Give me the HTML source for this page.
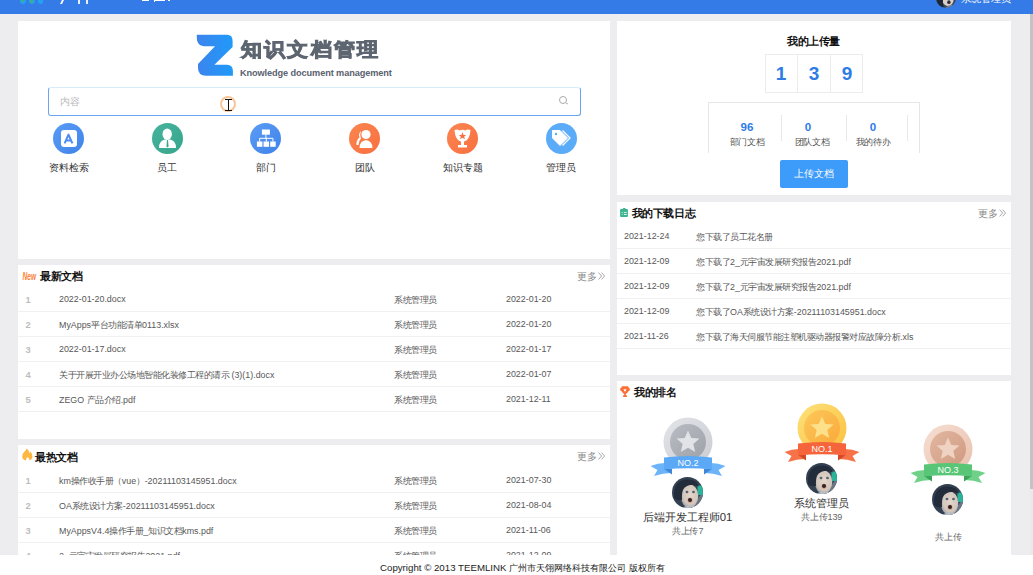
<!DOCTYPE html>
<html><head><meta charset="utf-8">
<style>
*{box-sizing:border-box;margin:0;padding:0}
html,body{width:1033px;height:575px;overflow:hidden}
body{position:relative;background:#ededf0;font-family:"Liberation Sans",sans-serif;color:#333}
.a{position:absolute;white-space:nowrap}
.card{position:absolute;background:#fff}
.hdr{position:absolute;left:0;top:0;width:1033px;height:14px;background:#357be8;overflow:hidden}
.ttl{position:absolute;font-size:10.7px;font-weight:bold;color:#111;letter-spacing:-0.4px;white-space:nowrap}
.more{position:absolute;font-size:10px;color:#888;white-space:nowrap;width:30px;height:12px}
.row{position:absolute;left:0;width:100%;height:25px;border-bottom:1px solid #f0f0f2}
.row i{font-style:normal;font-size:9px;letter-spacing:-0.5px}
.row span{position:absolute;top:7px;font-size:8.9px;color:#585858;white-space:nowrap}
.row .n{font-weight:bold;color:#bdbdbd;left:7.6px;font-size:9.4px;top:6.6px}
.lbl{position:absolute;font-size:10px;color:#333;white-space:nowrap;text-align:center;width:80px}
.ic{position:absolute;width:31px;height:31px;border-radius:50%}
</style></head><body>

<svg width="0" height="0" style="position:absolute"><defs><radialGradient id="fg" cx="0.55" cy="0.45" r="0.6"><stop offset="0" stop-color="#e3d6cc"/><stop offset="0.7" stop-color="#d2c6bd"/><stop offset="1" stop-color="#9d9ea2"/></radialGradient></defs></svg>
<!-- header -->
<div class="hdr">
  <div class="a" style="left:20px;top:-3px;width:5.8px;height:7px;border-radius:0 0 2.9px 2.9px;background:#24a0f4"></div><div class="a" style="left:21px;top:0;width:3px;height:1.6px;background:#3cae8c"></div>
  <div class="a" style="left:28.9px;top:-3px;width:5.8px;height:7px;border-radius:0 0 2.9px 2.9px;background:#24a0f4"></div><div class="a" style="left:30px;top:0;width:3px;height:2.6px;background:#3cae8c"></div>
  <div class="a" style="left:37.7px;top:-3px;width:5.6px;height:7px;border-radius:0 0 2.8px 2.8px;background:#24a0f4"></div>
  <div class="a" style="left:61.2px;top:0;width:1.6px;height:3.9px;background:#fff;transform:skewX(-25deg)"></div>
  <div class="a" style="left:78px;top:0;width:1.7px;height:3.9px;background:#e6f0ff"></div>
  <div class="a" style="left:86px;top:0;width:1.7px;height:3.9px;background:#e6f0ff"></div>
    <div class="a" style="left:142px;top:0;width:7px;height:1.1px;background:#fff"></div>
  <div class="a" style="left:154px;top:0;width:11px;height:1.2px;background:#fff"></div><div class="a" style="left:154px;top:0;width:1px;height:1.8px;background:#fff"></div><div class="a" style="left:168px;top:0;width:2px;height:1.1px;background:#fff"></div>
  <svg class="a" style="left:936px;top:-12px;filter:blur(0.3px)" width="20" height="20" viewBox="0 0 31 31">
    <defs><clipPath id="cph"><circle cx="15.5" cy="15.5" r="15.5"/></clipPath></defs>
    <g clip-path="url(#cph)">
      <rect width="31" height="31" fill="#3a4556"/>
      <ellipse cx="18.5" cy="17" rx="9" ry="11" fill="#d9d1c9"/>
      <path d="M1,24 Q0,8 8,6 Q11,12 11,18 Q10,24 12,30 Q5,30 1,24 Z" fill="#1f2734"/>
      <ellipse cx="20" cy="22" rx="2.6" ry="2.9" fill="#2a2a30"/>
      <path d="M14,31 Q22,24 31,27 L31,31 Z" fill="#7d8995"/>
      <rect x="0" y="26" width="4" height="5" fill="#2bb39a"/>
    </g>
  </svg>
  <div class="a" style="left:961px;top:-8px;font-size:10px;color:#fff">系统管理员</div>
</div>

<!-- left card 1 -->
<div class="card" style="left:18px;top:21px;width:592px;height:238px"></div>
<!-- logo -->
<svg class="a" style="left:196px;top:34px" width="38" height="43" viewBox="0 0 38 43">
  <defs><linearGradient id="zg" x1="0" y1="0" x2="1" y2="0">
    <stop offset="0" stop-color="#3d84ec"/><stop offset="1" stop-color="#1f9afa"/></linearGradient></defs>
  <path d="M0.8,0.8 L31,0.8 Q36.6,0.8 36.6,7 L36.6,13 L18.4,30.8 L31,30.8 Q36.9,31 36.9,37 L36.9,41.8 L10,41.8 Q2,41.6 2,34 L2,30 L19,12.2 L8,12.2 Q0.8,11.6 0.8,4 Z" fill="url(#zg)"/>
</svg>
<div class="a" style="left:241px;top:35.5px;font-size:21px;font-weight:bold;color:#5d6570;letter-spacing:2.2px;-webkit-text-stroke:1px #5d6570;transform:scaleY(0.9);transform-origin:0 40%">知识文档管理</div>
<div class="a" style="left:240px;top:67.5px;font-size:9.2px;font-weight:bold;color:#5b6270;letter-spacing:-0.1px">Knowledge document management</div>

<!-- search -->
<div class="a" style="left:48px;top:87px;width:533px;height:29px;border:1px solid #6aa6ee;border-top-color:#d6eefc;border-radius:3px;background:#fff"></div>
<div class="a" style="left:59.5px;top:94.5px;font-size:10px;color:#bbb">内容</div>
<div class="a" style="left:559px;top:96px;width:8px;height:8px;border:1px solid #aaa;border-radius:50%"></div>
<div class="a" style="left:566px;top:103px;width:2px;height:1px;background:#aaa;transform:rotate(45deg)"></div>
<!-- cursor -->
<div class="a" style="left:220px;top:96px;width:16px;height:16px;border:2.3px solid #f9c597;border-radius:50%"></div>
<div class="a" style="left:227.7px;top:99px;width:1.2px;height:12px;background:#111"></div>
<div class="a" style="left:225px;top:99px;width:7px;height:1.2px;background:#111"></div>
<div class="a" style="left:225px;top:109.8px;width:7px;height:1.2px;background:#111"></div>

<!-- icons -->
<div class="ic" style="left:53px;top:123px;background:linear-gradient(135deg,#5a9cf4,#3f83ea)"></div>
<div class="a" style="left:60.5px;top:129.5px;width:16.5px;height:17px;border-radius:3px;background:#fff"></div>
<svg class="a" style="left:60px;top:129px" width="17" height="18" viewBox="0 0 17 18"><path d="M4.6,14.3 L8.5,5.6 L12.4,14.3 M6.2,11.4 L10.8,11.4" stroke="#4a8cf0" stroke-width="2" fill="none" stroke-linejoin="round"/></svg>
<div class="lbl" style="left:29px;top:160.5px">资料检索</div>

<div class="ic" style="left:152px;top:123px;background:linear-gradient(135deg,#46b39c,#37a58c)"></div>
<svg class="a" style="left:152px;top:123px" width="31" height="31" viewBox="0 0 31 31">
  <ellipse cx="15.2" cy="11.3" rx="4.7" ry="5.7" fill="#fff"/>
  <path d="M7,25 Q7,17.5 13,16.5 L18,16.5 Q24,17.5 24,25 Z" fill="#fff"/>
  <path d="M15,17 L16,17 L16.6,23.5 L15.5,24.5 L14.4,23.5 Z" fill="#3aa88f"/>
</svg>
<div class="lbl" style="left:127px;top:160.5px">员工</div>

<div class="ic" style="left:250px;top:123px;background:linear-gradient(135deg,#5a9cf4,#3f83ea)"></div>
<svg class="a" style="left:250px;top:123px" width="31" height="31" viewBox="0 0 31 31">
  <rect x="11.9" y="6.5" width="8" height="5.2" fill="#fff"/>
  <path d="M15.9,11.5 V15.3 M9.65,18.6 V15.3 H22.95 V18.6 M16.3,15.3 V18.6" stroke="#fff" stroke-width="1" fill="none"/>
  <rect x="6.9" y="18.5" width="5.5" height="5.3" fill="#fff"/>
  <rect x="13.55" y="18.5" width="5.5" height="5.3" fill="#fff"/>
  <rect x="20.2" y="18.5" width="5.5" height="5.3" fill="#fff"/>
</svg>
<div class="lbl" style="left:226px;top:160.5px">部门</div>

<div class="ic" style="left:349px;top:123px;background:linear-gradient(135deg,#fb8550,#f8703f)"></div>
<svg class="a" style="left:349px;top:123px" width="31" height="31" viewBox="0 0 31 31">
  <path d="M12,8 Q9,11 10.5,14.5 Q7,17 7.5,22 L9.5,22 Q9.5,18 12,15.5 Q10.5,11.5 12,8 Z" fill="#fff"/>
  <circle cx="17" cy="11.5" r="4.6" fill="#fff"/>
  <path d="M10.5,25 Q10.5,18 17,17 Q23.5,18 23.5,25 Z" fill="#fff"/>
</svg>
<div class="lbl" style="left:325px;top:160.5px">团队</div>

<div class="ic" style="left:447px;top:123px;background:linear-gradient(135deg,#fb8550,#f8703f)"></div>
<svg class="a" style="left:447px;top:123px" width="31" height="31" viewBox="0 0 31 31">
  <path d="M7.5,7 Q11,6 12.5,7.5 Q15.5,6 18.5,7.5 Q20,6 23.5,7 L23,11 Q21.5,17.5 17,18.5 V22 H20 V24.5 H11 V22 H14 V18.5 Q9.5,17.5 8,11 Z" fill="#fff"/>
  <path d="M15.5,9.3 L16.6,11.9 L19.3,11.9 L17.2,13.6 L17.9,16.3 L15.5,14.7 L13.1,16.3 L13.8,13.6 L11.7,11.9 L14.4,11.9 Z" fill="#f8703f"/>
</svg>
<div class="lbl" style="left:423px;top:160.5px">知识专题</div>

<div class="ic" style="left:546px;top:123px;background:#5aabf8"></div>
<svg class="a" style="left:546px;top:123px" width="31" height="31" viewBox="0 0 31 31">
  <path d="M6.5,7.5 L14,7.5 L21.5,15 L14,22.5 L6.5,15 Z" fill="#fff" stroke="#fff" stroke-width="1" stroke-linejoin="round"/>
  <circle cx="10" cy="11" r="1.2" fill="#5aabf8"/>
  <path d="M16.5,7.5 L24,15 L16.5,22.5" stroke="#fff" stroke-width="1.3" fill="none"/>
</svg>
<div class="lbl" style="left:521px;top:160.5px">管理员</div>

<!-- left card 2 -->
<div class="card" style="left:18px;top:265px;width:592px;height:174px">
  <svg class="a" style="left:3.5px;top:7px" width="16" height="10" viewBox="0 0 16 10"><text x="0.5" y="8.3" font-family="Liberation Sans" font-size="10.5" font-weight="bold" font-style="italic" fill="#f98238" textLength="13.5" lengthAdjust="spacingAndGlyphs">New</text></svg>
  <div class="ttl" style="left:22px;top:5px">最新文档</div>
  <div class="more" style="left:559px;top:4.5px">更多<svg style="position:absolute;left:21px;top:2.5px" width="8" height="8" viewBox="0 0 8 8"><path d="M0.6,0.6 L3.6,4 L0.6,7.4 M3.6,0.6 L6.6,4 L3.6,7.4" stroke="#8a8a8a" stroke-width="0.75" fill="none"/></svg></div>
  <div class="row" style="top:22px"><span class="n">1</span><span style="left:41px">2022-01-20.docx</span><span style="left:376px"><i>系统管理员</i></span><span style="left:488px">2022-01-20</span></div>
  <div class="row" style="top:47px"><span class="n">2</span><span style="left:41px">MyApps<i>平台功能清单</i>0113.xlsx</span><span style="left:376px"><i>系统管理员</i></span><span style="left:488px">2022-01-20</span></div>
  <div class="row" style="top:72px"><span class="n">3</span><span style="left:41px">2022-01-17.docx</span><span style="left:376px"><i>系统管理员</i></span><span style="left:488px">2022-01-17</span></div>
  <div class="row" style="top:97px"><span class="n">4</span><span style="left:41px"><i>关于开展开业办公场地智能化装修工程的请示</i> (3)(1).docx</span><span style="left:376px"><i>系统管理员</i></span><span style="left:488px">2022-01-07</span></div>
  <div class="row" style="top:122px"><span class="n">5</span><span style="left:41px">ZEGO <i>产品介绍</i>.pdf</span><span style="left:376px"><i>系统管理员</i></span><span style="left:488px">2021-12-11</span></div>
</div>
<!-- left card 3 -->
<div class="card" style="left:18px;top:445px;width:592px;height:130px">
  <svg class="a" style="left:3.6px;top:3.2px" width="11" height="13" viewBox="0 0 11 13"><path d="M4.6,0.6 Q7.2,2.6 7.4,5.2 Q8.2,4.6 8.6,3.6 Q10.6,6 10.4,9 Q10.2,12 7.6,12.6 Q7.4,10 5.7,9 Q4,10 3.8,12.6 Q0.4,12 0.3,8.5 Q0.3,5.5 2.6,3.6 Q4.2,2.2 4.6,0.6 Z" fill="#fdb640"/></svg>
  <div class="ttl" style="left:17px;top:6px">最热文档</div>
  <div class="more" style="left:559px;top:4.5px">更多<svg style="position:absolute;left:21px;top:2.5px" width="8" height="8" viewBox="0 0 8 8"><path d="M0.6,0.6 L3.6,4 L0.6,7.4 M3.6,0.6 L6.6,4 L3.6,7.4" stroke="#8a8a8a" stroke-width="0.75" fill="none"/></svg></div>
  <div class="row" style="top:23px"><span class="n">1</span><span style="left:41px">km<i>操作收手册（</i>vue<i>）</i>-20211103145951.docx</span><span style="left:376px"><i>系统管理员</i></span><span style="left:488px">2021-07-30</span></div>
  <div class="row" style="top:48px"><span class="n">2</span><span style="left:41px">OA<i>系统设计方案</i>-20211103145951.docx</span><span style="left:376px"><i>系统管理员</i></span><span style="left:488px">2021-08-04</span></div>
  <div class="row" style="top:73px"><span class="n">3</span><span style="left:41px">MyAppsV4.4<i>操作手册</i>_<i>知识文档</i>kms.pdf</span><span style="left:376px"><i>系统管理员</i></span><span style="left:488px">2021-11-06</span></div>
  <div class="row" style="top:98px"><span class="n">4</span><span style="left:41px">2_<i>元宇宙发展研究报告</i>2021.pdf</span><span style="left:376px"><i>系统管理员</i></span><span style="left:488px">2021-12-09</span></div>
</div>
<!-- right card 1 -->
<div class="card" style="left:617px;top:21px;width:394px;height:174px">
  <div class="ttl" style="left:170px;top:14px">我的上传量</div>
  <div class="a" style="left:148px;top:33px;width:98px;height:39px;border:1px solid #ececec"></div>
  <div class="a" style="left:180px;top:33px;width:1px;height:39px;background:#ececec"></div>
  <div class="a" style="left:213px;top:33px;width:1px;height:39px;background:#ececec"></div>
  <div class="a" style="left:148px;top:42px;width:32px;text-align:center;font-size:19px;font-weight:bold;color:#2f7ce6">1</div>
  <div class="a" style="left:181px;top:42px;width:32px;text-align:center;font-size:19px;font-weight:bold;color:#2f7ce6">3</div>
  <div class="a" style="left:214px;top:42px;width:32px;text-align:center;font-size:19px;font-weight:bold;color:#2f7ce6">9</div>
  <div class="a" style="left:91px;top:81px;width:212px;height:50.5px;border:1px solid #e6e6e6;border-bottom:none"></div>
  <div class="a" style="left:164px;top:94px;width:1px;height:26px;background:#e8e8e8"></div>
  <div class="a" style="left:229px;top:94px;width:1px;height:26px;background:#e8e8e8"></div>
  <div class="a" style="left:290px;top:94px;width:1px;height:26px;background:#e8e8e8"></div>
  <div class="a" style="left:100px;top:99px;width:60px;text-align:center;font-size:11.6px;font-weight:bold;color:#2f7ce6">96</div>
  <div class="a" style="left:161px;top:99px;width:60px;text-align:center;font-size:11.6px;font-weight:bold;color:#2f7ce6">0</div>
  <div class="a" style="left:226px;top:99px;width:60px;text-align:center;font-size:11.6px;font-weight:bold;color:#2f7ce6">0</div>
  <div class="a" style="left:100px;top:114.5px;width:60px;text-align:center;font-size:9px;letter-spacing:-0.3px;color:#555">部门文档</div>
  <div class="a" style="left:165px;top:114.5px;width:60px;text-align:center;font-size:9px;letter-spacing:-0.3px;color:#555">团队文档</div>
  <div class="a" style="left:226px;top:114.5px;width:60px;text-align:center;font-size:9px;letter-spacing:-0.3px;color:#555">我的待办</div>
  <div class="a" style="left:163px;top:139px;width:68px;height:28px;border-radius:2px;background:#3d9bfa;color:#fff;font-size:9.8px;text-align:center;line-height:28px">上传文档</div>
</div>
<!-- right card 2 -->
<div class="card" style="left:617px;top:202px;width:394px;height:173px">
  <svg class="a" style="left:3px;top:6px" width="8" height="9" viewBox="0 0 8 9"><rect x="0.1" y="1" width="7.8" height="7.9" rx="0.9" fill="#3ab38f"/><rect x="2.9" y="0" width="2.6" height="1.6" rx="0.4" fill="#3ab38f"/><circle cx="2.2" cy="4.4" r="0.6" fill="#cfe9e0"/><circle cx="2.2" cy="6.5" r="0.6" fill="#cfe9e0"/><rect x="3.9" y="3.9" width="2.8" height="1" fill="#e2f3ee"/><rect x="3.9" y="6" width="2.8" height="1" fill="#e2f3ee"/></svg>
  <div class="ttl" style="left:14.5px;top:5px">我的下载日志</div>
  <div class="more" style="left:361px;top:4.5px">更多<svg style="position:absolute;left:21px;top:2.5px" width="8" height="8" viewBox="0 0 8 8"><path d="M0.6,0.6 L3.6,4 L0.6,7.4 M3.6,0.6 L6.6,4 L3.6,7.4" stroke="#8a8a8a" stroke-width="0.75" fill="none"/></svg></div>
  <div class="row" style="top:22px"><span style="left:7px">2021-12-24</span><span style="left:79px"><i>您下载了员工花名册</i></span></div>
  <div class="row" style="top:47px"><span style="left:7px">2021-12-09</span><span style="left:79px"><i>您下载了</i>2_<i>元宇宙发展研究报告</i>2021.pdf</span></div>
  <div class="row" style="top:72px"><span style="left:7px">2021-12-09</span><span style="left:79px"><i>您下载了</i>2_<i>元宇宙发展研究报告</i>2021.pdf</span></div>
  <div class="row" style="top:97px"><span style="left:7px">2021-12-09</span><span style="left:79px"><i>您下载了</i>OA<i>系统设计方案</i>-20211103145951.docx</span></div>
  <div class="row" style="top:122px"><span style="left:7px">2021-11-26</span><span style="left:79px"><i>您下载了海天伺服节能注塑机驱动器报警对应故障分析</i>.xls</span></div>
</div>
<!-- right card 3 -->
<div class="card" style="left:617px;top:381px;width:394px;height:194px">
  <svg class="a" style="left:3px;top:4.8px" width="10" height="11" viewBox="0 0 10 11"><path d="M1.8,0.2 H8.2 L8.3,1.3 Q9.9,1.8 9.9,3.5 Q9.9,5.2 8.2,5.6 Q7.4,7.5 5.8,8 V9 Q7,9.3 7.2,10.9 H2.8 Q3,9.3 4.2,9 V8 Q2.6,7.5 1.8,5.6 Q0.1,5.2 0.1,3.5 Q0.1,1.8 1.7,1.3 Z" fill="#fa7038"/><path d="M5,2.4 L5.5,3.6 L6.7,3.6 L5.8,4.4 L6.1,5.6 L5,4.9 L3.9,5.6 L4.2,4.4 L3.3,3.6 L4.5,3.6 Z" fill="#fff"/></svg>
  <div class="ttl" style="left:17px;top:5px">我的排名</div>

  <svg class="a" style="left:30.5px;top:34.5px" width="80" height="62" viewBox="0 0 80 62">
    <defs><linearGradient id="o2" x1="0" y1="0" x2="1" y2="1"><stop offset="0" stop-color="#e2e4e8"/><stop offset="1" stop-color="#c9ccd2"/></linearGradient>
    <linearGradient id="i2" x1="0" y1="0" x2="1" y2="1"><stop offset="0" stop-color="#b9bcc2"/><stop offset="1" stop-color="#9ea1a8"/></linearGradient></defs>
    <circle cx="40" cy="26" r="24.5" fill="url(#o2)"/>
    <circle cx="40" cy="26" r="18" fill="url(#i2)"/>
    <path d="M40,14.5 L43.3,22 L51.5,22.6 L45.3,28 L47.2,36 L40,31.8 L32.8,36 L34.7,28 L28.5,22.6 L36.7,22 Z" fill="#e1e3e7"/>
    <path d="M2.5,50 Q10,47 17,47 L23,57 Q15,57 6,60 L9.5,54 Z" fill="#6bb4fa"/>
    <path d="M77.5,50 Q70,47 63,47 L57,57 Q65,57 74,60 L70.5,54 Z" fill="#6bb4fa"/>
    <path d="M16,53 L24,53 L24,58.5 Z" fill="#3f86d8"/>
    <path d="M64,53 L56,53 L56,58.5 Z" fill="#3f86d8"/>
    <path d="M16,41.5 Q40,38.5 64,41.5 L64,53.5 Q40,51 16,53.5 Z" fill="#5aa8f6"/>
    <text x="40" y="50.3" text-anchor="middle" font-family="Liberation Sans" font-size="9" fill="#fff">NO.2</text>
  </svg>
  <svg class="a" style="left:164.5px;top:20.5px" width="80" height="62" viewBox="0 0 80 62">
    <defs><linearGradient id="o1" x1="0" y1="0" x2="1" y2="1"><stop offset="0" stop-color="#fde27a"/><stop offset="1" stop-color="#fbbf3f"/></linearGradient>
    <linearGradient id="i1" x1="0" y1="0" x2="1" y2="1"><stop offset="0" stop-color="#fcc85a"/><stop offset="1" stop-color="#faa93a"/></linearGradient></defs>
    <circle cx="40" cy="26" r="24.5" fill="url(#o1)"/>
    <circle cx="40" cy="26" r="18" fill="url(#i1)"/>
    <path d="M40,14.5 L43.3,22 L51.5,22.6 L45.3,28 L47.2,36 L40,31.8 L32.8,36 L34.7,28 L28.5,22.6 L36.7,22 Z" fill="#fde08a"/>
    <path d="M2.5,50 Q10,47 17,47 L23,57 Q15,57 6,60 L9.5,54 Z" fill="#f77347"/>
    <path d="M77.5,50 Q70,47 63,47 L57,57 Q65,57 74,60 L70.5,54 Z" fill="#f77347"/>
    <path d="M16,53 L24,53 L24,58.5 Z" fill="#d4482a"/>
    <path d="M64,53 L56,53 L56,58.5 Z" fill="#d4482a"/>
    <path d="M16,41.5 Q40,38.5 64,41.5 L64,53.5 Q40,51 16,53.5 Z" fill="#f5643b"/>
    <text x="40" y="50.3" text-anchor="middle" font-family="Liberation Sans" font-size="9" fill="#fff">NO.1</text>
  </svg>
  <svg class="a" style="left:291px;top:41.5px" width="80" height="62" viewBox="0 0 80 62">
    <defs><linearGradient id="o3" x1="0" y1="0" x2="1" y2="1"><stop offset="0" stop-color="#f6dfd3"/><stop offset="1" stop-color="#e9c0ad"/></linearGradient>
    <linearGradient id="i3" x1="0" y1="0" x2="1" y2="1"><stop offset="0" stop-color="#e2b7a1"/><stop offset="1" stop-color="#cf9a80"/></linearGradient></defs>
    <circle cx="40" cy="26" r="24.5" fill="url(#o3)"/>
    <circle cx="40" cy="26" r="18" fill="url(#i3)"/>
    <path d="M40,14.5 L43.3,22 L51.5,22.6 L45.3,28 L47.2,36 L40,31.8 L32.8,36 L34.7,28 L28.5,22.6 L36.7,22 Z" fill="#f0d2c2"/>
    <path d="M2.5,50 Q10,47 17,47 L23,57 Q15,57 6,60 L9.5,54 Z" fill="#6fd088"/>
    <path d="M77.5,50 Q70,47 63,47 L57,57 Q65,57 74,60 L70.5,54 Z" fill="#6fd088"/>
    <path d="M16,53 L24,53 L24,58.5 Z" fill="#3ba35a"/>
    <path d="M64,53 L56,53 L56,58.5 Z" fill="#3ba35a"/>
    <path d="M16,41.5 Q40,38.5 64,41.5 L64,53.5 Q40,51 16,53.5 Z" fill="#58c676"/>
    <text x="40" y="50.3" text-anchor="middle" font-family="Liberation Sans" font-size="9" fill="#fff">NO.3</text>
  </svg>
  <svg class="a" style="left:55.0px;top:96.0px;filter:blur(0.45px)" width="31" height="31" viewBox="0 0 31 31">
    <defs><clipPath id="cp70"><circle cx="15.5" cy="15.5" r="15.5"/></clipPath></defs>
    <g clip-path="url(#cp70)">
      <rect width="31" height="31" fill="#334052"/>
      <path d="M18,31 L31,15 L31,31 Z" fill="#6a7683"/>
      <rect x="25.5" y="8.5" width="5.5" height="9.5" fill="#2bb39a"/>
      <ellipse cx="17.5" cy="19" rx="8.8" ry="11.5" fill="url(#fg)"/>
      <path d="M2,21 Q1,4 14,2.5 Q25,2 27,9.5 Q23,7.5 18.5,8 Q13.5,8.8 11.5,12 Q9.5,15 10,23 Q5,24 2,21 Z" fill="#222c3a"/>
      <ellipse cx="15" cy="15" rx="1.4" ry="1.2" fill="#56606c"/>
      <ellipse cx="21.5" cy="15" rx="1.4" ry="1.2" fill="#56606c"/>
      <ellipse cx="18" cy="23.2" rx="2.7" ry="2.8" fill="#d9a892"/>
      <ellipse cx="18" cy="23" rx="2" ry="2.1" fill="#2e2226"/>
      <path d="M9,31 Q16,27.5 25,29.5 L25,31 Z" fill="#b5c0c8"/>
    </g>
  </svg>
  <svg class="a" style="left:188.9px;top:82.2px;filter:blur(0.45px)" width="31" height="31" viewBox="0 0 31 31">
    <defs><clipPath id="cp204"><circle cx="15.5" cy="15.5" r="15.5"/></clipPath></defs>
    <g clip-path="url(#cp204)">
      <rect width="31" height="31" fill="#334052"/>
      <path d="M18,31 L31,15 L31,31 Z" fill="#6a7683"/>
      <rect x="25.5" y="8.5" width="5.5" height="9.5" fill="#2bb39a"/>
      <ellipse cx="17.5" cy="19" rx="8.8" ry="11.5" fill="url(#fg)"/>
      <path d="M2,21 Q1,4 14,2.5 Q25,2 27,9.5 Q23,7.5 18.5,8 Q13.5,8.8 11.5,12 Q9.5,15 10,23 Q5,24 2,21 Z" fill="#222c3a"/>
      <ellipse cx="15" cy="15" rx="1.4" ry="1.2" fill="#56606c"/>
      <ellipse cx="21.5" cy="15" rx="1.4" ry="1.2" fill="#56606c"/>
      <ellipse cx="18" cy="23.2" rx="2.7" ry="2.8" fill="#d9a892"/>
      <ellipse cx="18" cy="23" rx="2" ry="2.1" fill="#2e2226"/>
      <path d="M9,31 Q16,27.5 25,29.5 L25,31 Z" fill="#b5c0c8"/>
    </g>
  </svg>
  <svg class="a" style="left:315.3px;top:103.3px;filter:blur(0.45px)" width="31" height="31" viewBox="0 0 31 31">
    <defs><clipPath id="cp330"><circle cx="15.5" cy="15.5" r="15.5"/></clipPath></defs>
    <g clip-path="url(#cp330)">
      <rect width="31" height="31" fill="#334052"/>
      <path d="M18,31 L31,15 L31,31 Z" fill="#6a7683"/>
      <rect x="25.5" y="8.5" width="5.5" height="9.5" fill="#2bb39a"/>
      <ellipse cx="17.5" cy="19" rx="8.8" ry="11.5" fill="url(#fg)"/>
      <path d="M2,21 Q1,4 14,2.5 Q25,2 27,9.5 Q23,7.5 18.5,8 Q13.5,8.8 11.5,12 Q9.5,15 10,23 Q5,24 2,21 Z" fill="#222c3a"/>
      <ellipse cx="15" cy="15" rx="1.4" ry="1.2" fill="#56606c"/>
      <ellipse cx="21.5" cy="15" rx="1.4" ry="1.2" fill="#56606c"/>
      <ellipse cx="18" cy="23.2" rx="2.7" ry="2.8" fill="#d9a892"/>
      <ellipse cx="18" cy="23" rx="2" ry="2.1" fill="#2e2226"/>
      <path d="M9,31 Q16,27.5 25,29.5 L25,31 Z" fill="#b5c0c8"/>
    </g>
  </svg>
  <div class="a" style="left:0;top:129px;width:141px;text-align:center;font-size:11.4px;color:#333">后端开发工程师01</div>
  <div class="a" style="left:0;top:144px;width:141px;text-align:center;font-size:9px;letter-spacing:-0.1px;color:#666">共上传7</div>
  <div class="a" style="left:134px;top:115px;width:141px;text-align:center;font-size:11.4px;color:#333">系统管理员</div>
  <div class="a" style="left:134px;top:129.5px;width:141px;text-align:center;font-size:9px;letter-spacing:-0.1px;color:#666">共上传139</div>
  <div class="a" style="left:261px;top:150px;width:141px;text-align:center;font-size:9px;letter-spacing:-0.1px;color:#666">共上传</div>
</div>

<!-- scrollbar -->
<div class="a" style="left:1030px;top:14px;width:3px;height:475px;background:#c3c3c6"></div>
<div class="a" style="left:1030px;top:489px;width:3px;height:66px;background:#eaeaec"></div>

<!-- footer -->
<div class="a" style="left:0;top:555px;width:1033px;height:20px;background:#fff"></div>
<div class="a" style="left:380px;top:561.5px;font-size:9.7px;color:#222">Copyright © 2013 TEEMLINK <i style="font-style:normal;font-size:9px">广州市天翎网络科技有限公司 版权所有</i></div>

</body></html>
